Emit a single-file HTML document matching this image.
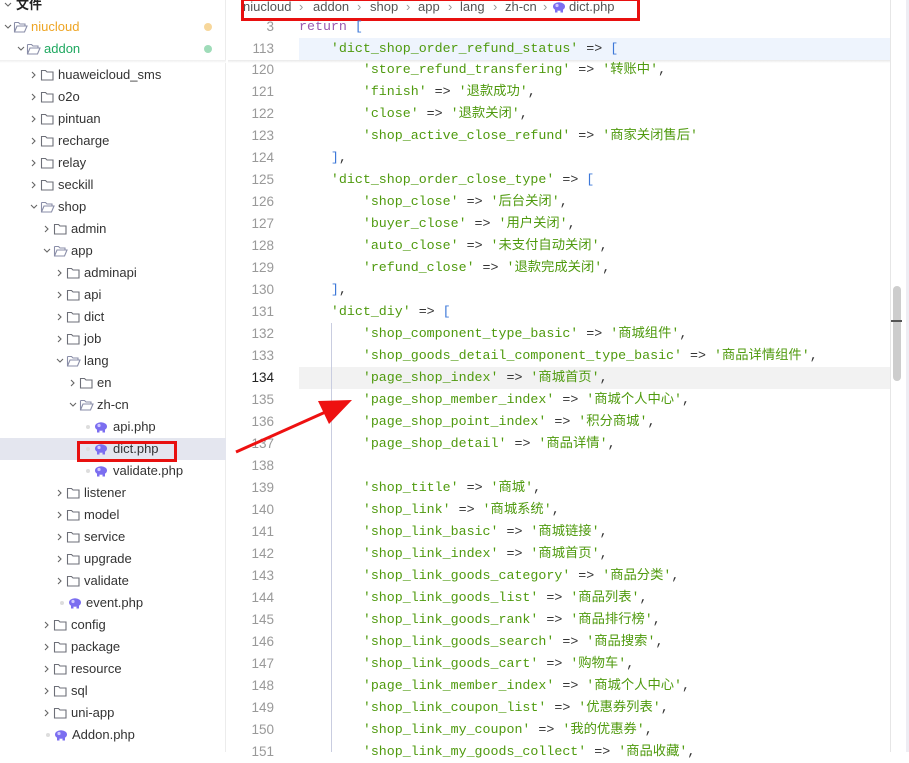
<!DOCTYPE html>
<html><head><meta charset="utf-8"><style>
*{margin:0;padding:0;box-sizing:border-box}
body{width:909px;height:752px;overflow:hidden;background:#fff;position:relative;font-family:"Liberation Sans","Noto Sans CJK SC",sans-serif}
#side{position:absolute;left:0;top:0;width:226px;height:752px;background:#fff;border-right:1px solid #ececec}
.r{position:absolute;height:22px;line-height:22px;font-size:13px;color:#333;white-space:nowrap}
.r svg{position:absolute;top:0}
.r .t{position:absolute;top:0}
.code{position:absolute;left:228px;right:0;top:0;height:752px}
.l{position:absolute;left:0;height:22px;line-height:22px;width:680px;font-family:"Liberation Mono","Noto Sans CJK SC",monospace;font-size:13.3px;white-space:pre;color:#333}
.n{position:absolute;left:0;width:46px;text-align:right;color:#999;font-family:"Liberation Sans",sans-serif;font-size:13.5px}
.c{position:absolute;left:71px}
.s{color:#4f9a0e}
.k{color:#9a5ab0}
.b{color:#3d78d8}
.bc{position:absolute;top:0;line-height:14px;font-size:13px;color:#555;white-space:nowrap}
.sp{color:#999}
</style></head><body>
<svg width="0" height="0" style="position:absolute"><defs>
<g id="cr"><polyline points="2,8 5,11 2,14" fill="none" stroke="#666" stroke-width="1.1"/></g>
<g id="cd"><polyline points="1,9 4,12 7,9" fill="none" stroke="#666" stroke-width="1.1"/></g>
<g id="fc"><path d="M1.5,6.5 h4 l1.5,1.5 h6 v8 h-11.5 z" fill="none" stroke="#6d6f78" stroke-width="1.1"/></g>
<g id="fo"><path d="M1.5,6.5 h4 l1.5,1.5 h5 v2 M1.5,6.5 v9.5 h10 l2.5,-6 h-10 l-2.5,6" fill="none" stroke="#8a8ea8" stroke-width="1.1"/></g>
<g id="el"><ellipse cx="7" cy="10.5" rx="6" ry="4.3" fill="#7b6ef0"/><rect x="3" y="13" width="2.5" height="3.5" fill="#7b6ef0"/><rect x="8.5" y="13" width="2.5" height="3.5" fill="#7b6ef0"/><circle cx="5" cy="9.5" r="1.6" fill="#cfc9ff"/></g>
</defs></svg>

<div id="side">
<div class="r" style="top:-6px;left:0"><svg width="10" height="22" style="left:4px"><use href="#cd"/></svg><span class="t" style="left:16px;font-weight:bold;color:#222">文件</span></div>
<div class="r" style="top:16px;left:0"><svg width="10" height="22" style="left:4px"><use href="#cd"/></svg><svg width="16" height="22" style="left:13px"><use href="#fo"/></svg><span class="t" style="left:31px;color:#eea524">niucloud</span></div>
<div style="position:absolute;left:204px;top:23px;width:8px;height:8px;border-radius:50%;background:#f7d79b"></div>
<div class="r" style="top:38px;left:0"><svg width="10" height="22" style="left:17px"><use href="#cd"/></svg><svg width="16" height="22" style="left:26px"><use href="#fo"/></svg><span class="t" style="left:44px;color:#1fa860">addon</span></div>
<div style="position:absolute;left:204px;top:45px;width:8px;height:8px;border-radius:50%;background:#9fdcb9"></div>
<div style="position:absolute;left:0;top:60px;width:226px;height:3px;background:linear-gradient(#eee,#fff)"></div>

<div style="position:absolute;left:0;top:438px;width:226px;height:22px;background:#e4e6ef"></div>

<div class="r" style="top:64px;left:30px"><svg width="10" height="22"><use href="#cr"/></svg><svg width="16" height="22" style="left:10px"><use href="#fc"/></svg><span class="t" style="left:28px">huaweicloud_sms</span></div>
<div class="r" style="top:86px;left:30px"><svg width="10" height="22"><use href="#cr"/></svg><svg width="16" height="22" style="left:10px"><use href="#fc"/></svg><span class="t" style="left:28px">o2o</span></div>
<div class="r" style="top:108px;left:30px"><svg width="10" height="22"><use href="#cr"/></svg><svg width="16" height="22" style="left:10px"><use href="#fc"/></svg><span class="t" style="left:28px">pintuan</span></div>
<div class="r" style="top:130px;left:30px"><svg width="10" height="22"><use href="#cr"/></svg><svg width="16" height="22" style="left:10px"><use href="#fc"/></svg><span class="t" style="left:28px">recharge</span></div>
<div class="r" style="top:152px;left:30px"><svg width="10" height="22"><use href="#cr"/></svg><svg width="16" height="22" style="left:10px"><use href="#fc"/></svg><span class="t" style="left:28px">relay</span></div>
<div class="r" style="top:174px;left:30px"><svg width="10" height="22"><use href="#cr"/></svg><svg width="16" height="22" style="left:10px"><use href="#fc"/></svg><span class="t" style="left:28px">seckill</span></div>
<div class="r" style="top:196px;left:30px"><svg width="10" height="22"><use href="#cd"/></svg><svg width="16" height="22" style="left:10px"><use href="#fo"/></svg><span class="t" style="left:28px">shop</span></div>
<div class="r" style="top:218px;left:43px"><svg width="10" height="22"><use href="#cr"/></svg><svg width="16" height="22" style="left:10px"><use href="#fc"/></svg><span class="t" style="left:28px">admin</span></div>
<div class="r" style="top:240px;left:43px"><svg width="10" height="22"><use href="#cd"/></svg><svg width="16" height="22" style="left:10px"><use href="#fo"/></svg><span class="t" style="left:28px">app</span></div>
<div class="r" style="top:262px;left:56px"><svg width="10" height="22"><use href="#cr"/></svg><svg width="16" height="22" style="left:10px"><use href="#fc"/></svg><span class="t" style="left:28px">adminapi</span></div>
<div class="r" style="top:284px;left:56px"><svg width="10" height="22"><use href="#cr"/></svg><svg width="16" height="22" style="left:10px"><use href="#fc"/></svg><span class="t" style="left:28px">api</span></div>
<div class="r" style="top:306px;left:56px"><svg width="10" height="22"><use href="#cr"/></svg><svg width="16" height="22" style="left:10px"><use href="#fc"/></svg><span class="t" style="left:28px">dict</span></div>
<div class="r" style="top:328px;left:56px"><svg width="10" height="22"><use href="#cr"/></svg><svg width="16" height="22" style="left:10px"><use href="#fc"/></svg><span class="t" style="left:28px">job</span></div>
<div class="r" style="top:350px;left:56px"><svg width="10" height="22"><use href="#cd"/></svg><svg width="16" height="22" style="left:10px"><use href="#fo"/></svg><span class="t" style="left:28px">lang</span></div>
<div class="r" style="top:372px;left:69px"><svg width="10" height="22"><use href="#cr"/></svg><svg width="16" height="22" style="left:10px"><use href="#fc"/></svg><span class="t" style="left:28px">en</span></div>
<div class="r" style="top:394px;left:69px"><svg width="10" height="22"><use href="#cd"/></svg><svg width="16" height="22" style="left:10px"><use href="#fo"/></svg><span class="t" style="left:28px">zh-cn</span></div>
<div class="r" style="top:416px;left:86px"><span style="position:absolute;left:0;top:9px;width:4px;height:4px;border-radius:50%;background:#ddd"></span><svg width="14" height="22" style="left:8px"><use href="#el"/></svg><span class="t" style="left:27px">api.php</span></div>
<div class="r" style="top:438px;left:86px"><span style="position:absolute;left:0;top:9px;width:4px;height:4px;border-radius:50%;background:#ddd"></span><svg width="14" height="22" style="left:8px"><use href="#el"/></svg><span class="t" style="left:27px">dict.php</span></div>
<div class="r" style="top:460px;left:86px"><span style="position:absolute;left:0;top:9px;width:4px;height:4px;border-radius:50%;background:#ddd"></span><svg width="14" height="22" style="left:8px"><use href="#el"/></svg><span class="t" style="left:27px">validate.php</span></div>
<div class="r" style="top:482px;left:56px"><svg width="10" height="22"><use href="#cr"/></svg><svg width="16" height="22" style="left:10px"><use href="#fc"/></svg><span class="t" style="left:28px">listener</span></div>
<div class="r" style="top:504px;left:56px"><svg width="10" height="22"><use href="#cr"/></svg><svg width="16" height="22" style="left:10px"><use href="#fc"/></svg><span class="t" style="left:28px">model</span></div>
<div class="r" style="top:526px;left:56px"><svg width="10" height="22"><use href="#cr"/></svg><svg width="16" height="22" style="left:10px"><use href="#fc"/></svg><span class="t" style="left:28px">service</span></div>
<div class="r" style="top:548px;left:56px"><svg width="10" height="22"><use href="#cr"/></svg><svg width="16" height="22" style="left:10px"><use href="#fc"/></svg><span class="t" style="left:28px">upgrade</span></div>
<div class="r" style="top:570px;left:56px"><svg width="10" height="22"><use href="#cr"/></svg><svg width="16" height="22" style="left:10px"><use href="#fc"/></svg><span class="t" style="left:28px">validate</span></div>
<div class="r" style="top:592px;left:60px"><span style="position:absolute;left:0;top:9px;width:4px;height:4px;border-radius:50%;background:#ddd"></span><svg width="14" height="22" style="left:8px"><use href="#el"/></svg><span class="t" style="left:26px">event.php</span></div>
<div class="r" style="top:614px;left:43px"><svg width="10" height="22"><use href="#cr"/></svg><svg width="16" height="22" style="left:10px"><use href="#fc"/></svg><span class="t" style="left:28px">config</span></div>
<div class="r" style="top:636px;left:43px"><svg width="10" height="22"><use href="#cr"/></svg><svg width="16" height="22" style="left:10px"><use href="#fc"/></svg><span class="t" style="left:28px">package</span></div>
<div class="r" style="top:658px;left:43px"><svg width="10" height="22"><use href="#cr"/></svg><svg width="16" height="22" style="left:10px"><use href="#fc"/></svg><span class="t" style="left:28px">resource</span></div>
<div class="r" style="top:680px;left:43px"><svg width="10" height="22"><use href="#cr"/></svg><svg width="16" height="22" style="left:10px"><use href="#fc"/></svg><span class="t" style="left:28px">sql</span></div>
<div class="r" style="top:702px;left:43px"><svg width="10" height="22"><use href="#cr"/></svg><svg width="16" height="22" style="left:10px"><use href="#fc"/></svg><span class="t" style="left:28px">uni-app</span></div>
<div class="r" style="top:724px;left:46px"><span style="position:absolute;left:0;top:9px;width:4px;height:4px;border-radius:50%;background:#ddd"></span><svg width="14" height="22" style="left:8px"><use href="#el"/></svg><span class="t" style="left:26px">Addon.php</span></div>

<div style="position:absolute;left:77px;top:441px;width:100px;height:21px;border:3px solid #e8100f"></div>
</div>

<div class="code">
<div style="position:absolute;left:71px;top:38px;width:591px;height:22px;background:#eef4fd"></div>
<div style="position:absolute;left:71px;top:367px;width:591px;height:22px;background:#f2f2f2"></div>
<div style="position:absolute;left:103px;top:323px;width:1px;height:429px;background:#c9cde0"></div>
<div style="position:absolute;left:662px;top:0;width:1px;height:752px;background:#e6e6e6"></div>
<div style="position:absolute;left:665px;top:286px;width:8px;height:95px;border-radius:4px;background:#cdcdcd"></div>
<div style="position:absolute;left:663px;top:320px;width:11px;height:2px;background:#555"></div>
<div style="position:absolute;left:678px;top:0;width:3px;height:752px;background:#eeedf3"></div>
</div>

<span class="bc" style="left:243px">niucloud</span><span class="bc sp" style="left:299px">›</span>
<span class="bc" style="left:313px">addon</span><span class="bc sp" style="left:357px">›</span>
<span class="bc" style="left:370px">shop</span><span class="bc sp" style="left:406px">›</span>
<span class="bc" style="left:418px">app</span><span class="bc sp" style="left:448px">›</span>
<span class="bc" style="left:460px">lang</span><span class="bc sp" style="left:493px">›</span>
<span class="bc" style="left:505px">zh-cn</span><span class="bc sp" style="left:543px">›</span>
<svg class="bc" width="14" height="14" style="left:552px;top:0"><g transform="translate(0,-4)"><use href="#el"/></g></svg>
<span class="bc" style="left:569px">dict.php</span>
<div style="position:absolute;left:241px;top:-2px;width:399px;height:23px;border:3px solid #e8100f"></div>

<div class="code">
<div class="l" style="top:16px"><span class="n">3</span><span class="c"><span class="k">return</span> <span class="b">[</span></span></div>
<div class="l" style="top:38px"><span class="n">113</span><span class="c">    <span class="s">'dict_shop_order_refund_status'</span> =&gt; <span class="b">[</span></span></div>
<div style="position:absolute;left:0;top:60px;width:662px;height:3px;background:linear-gradient(#e8e8e8,rgba(255,255,255,0))"></div>
<div class="l" style="top:59px"><span class="n">120</span><span class="c">        <span class="s">'store_refund_transfering'</span> =&gt; <span class="s">'转账中'</span>,</span></div>
<div class="l" style="top:81px"><span class="n">121</span><span class="c">        <span class="s">'finish'</span> =&gt; <span class="s">'退款成功'</span>,</span></div>
<div class="l" style="top:103px"><span class="n">122</span><span class="c">        <span class="s">'close'</span> =&gt; <span class="s">'退款关闭'</span>,</span></div>
<div class="l" style="top:125px"><span class="n">123</span><span class="c">        <span class="s">'shop_active_close_refund'</span> =&gt; <span class="s">'商家关闭售后'</span></span></div>
<div class="l" style="top:147px"><span class="n">124</span><span class="c">    <span class="b">]</span>,</span></div>
<div class="l" style="top:169px"><span class="n">125</span><span class="c">    <span class="s">'dict_shop_order_close_type'</span> =&gt; <span class="b">[</span></span></div>
<div class="l" style="top:191px"><span class="n">126</span><span class="c">        <span class="s">'shop_close'</span> =&gt; <span class="s">'后台关闭'</span>,</span></div>
<div class="l" style="top:213px"><span class="n">127</span><span class="c">        <span class="s">'buyer_close'</span> =&gt; <span class="s">'用户关闭'</span>,</span></div>
<div class="l" style="top:235px"><span class="n">128</span><span class="c">        <span class="s">'auto_close'</span> =&gt; <span class="s">'未支付自动关闭'</span>,</span></div>
<div class="l" style="top:257px"><span class="n">129</span><span class="c">        <span class="s">'refund_close'</span> =&gt; <span class="s">'退款完成关闭'</span>,</span></div>
<div class="l" style="top:279px"><span class="n">130</span><span class="c">    <span class="b">]</span>,</span></div>
<div class="l" style="top:301px"><span class="n">131</span><span class="c">    <span class="s">'dict_diy'</span> =&gt; <span class="b">[</span></span></div>
<div class="l" style="top:323px"><span class="n">132</span><span class="c">        <span class="s">'shop_component_type_basic'</span> =&gt; <span class="s">'商城组件'</span>,</span></div>
<div class="l" style="top:345px"><span class="n">133</span><span class="c">        <span class="s">'shop_goods_detail_component_type_basic'</span> =&gt; <span class="s">'商品详情组件'</span>,</span></div>
<div class="l" style="top:367px"><span class="n" style="color:#222">134</span><span class="c">        <span class="s">'page_shop_index'</span> =&gt; <span class="s">'商城首页'</span>,</span></div>
<div class="l" style="top:389px"><span class="n">135</span><span class="c">        <span class="s">'page_shop_member_index'</span> =&gt; <span class="s">'商城个人中心'</span>,</span></div>
<div class="l" style="top:411px"><span class="n">136</span><span class="c">        <span class="s">'page_shop_point_index'</span> =&gt; <span class="s">'积分商城'</span>,</span></div>
<div class="l" style="top:433px"><span class="n">137</span><span class="c">        <span class="s">'page_shop_detail'</span> =&gt; <span class="s">'商品详情'</span>,</span></div>
<div class="l" style="top:455px"><span class="n">138</span><span class="c"></span></div>
<div class="l" style="top:477px"><span class="n">139</span><span class="c">        <span class="s">'shop_title'</span> =&gt; <span class="s">'商城'</span>,</span></div>
<div class="l" style="top:499px"><span class="n">140</span><span class="c">        <span class="s">'shop_link'</span> =&gt; <span class="s">'商城系统'</span>,</span></div>
<div class="l" style="top:521px"><span class="n">141</span><span class="c">        <span class="s">'shop_link_basic'</span> =&gt; <span class="s">'商城链接'</span>,</span></div>
<div class="l" style="top:543px"><span class="n">142</span><span class="c">        <span class="s">'shop_link_index'</span> =&gt; <span class="s">'商城首页'</span>,</span></div>
<div class="l" style="top:565px"><span class="n">143</span><span class="c">        <span class="s">'shop_link_goods_category'</span> =&gt; <span class="s">'商品分类'</span>,</span></div>
<div class="l" style="top:587px"><span class="n">144</span><span class="c">        <span class="s">'shop_link_goods_list'</span> =&gt; <span class="s">'商品列表'</span>,</span></div>
<div class="l" style="top:609px"><span class="n">145</span><span class="c">        <span class="s">'shop_link_goods_rank'</span> =&gt; <span class="s">'商品排行榜'</span>,</span></div>
<div class="l" style="top:631px"><span class="n">146</span><span class="c">        <span class="s">'shop_link_goods_search'</span> =&gt; <span class="s">'商品搜索'</span>,</span></div>
<div class="l" style="top:653px"><span class="n">147</span><span class="c">        <span class="s">'shop_link_goods_cart'</span> =&gt; <span class="s">'购物车'</span>,</span></div>
<div class="l" style="top:675px"><span class="n">148</span><span class="c">        <span class="s">'page_link_member_index'</span> =&gt; <span class="s">'商城个人中心'</span>,</span></div>
<div class="l" style="top:697px"><span class="n">149</span><span class="c">        <span class="s">'shop_link_coupon_list'</span> =&gt; <span class="s">'优惠券列表'</span>,</span></div>
<div class="l" style="top:719px"><span class="n">150</span><span class="c">        <span class="s">'shop_link_my_coupon'</span> =&gt; <span class="s">'我的优惠券'</span>,</span></div>
<div class="l" style="top:741px"><span class="n">151</span><span class="c">        <span class="s">'shop_link_my_goods_collect'</span> =&gt; <span class="s">'商品收藏'</span>,</span></div>
</div>

<svg width="909" height="752" style="position:absolute;left:0;top:0;pointer-events:none">
<line x1="236" y1="452" x2="330" y2="410" stroke="#ee1111" stroke-width="3"/>
<polygon points="352,400 318,401 329,424" fill="#ee1111"/>
</svg>
</body></html>
